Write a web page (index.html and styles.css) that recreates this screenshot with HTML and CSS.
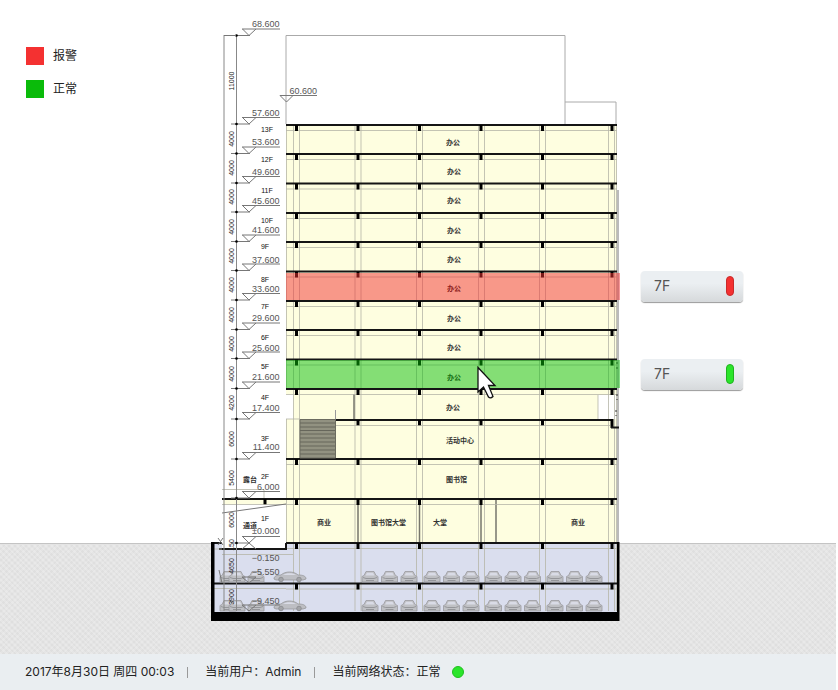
FILE: index.html
```html
<!DOCTYPE html>
<html lang="zh-CN">
<head>
<meta charset="utf-8">
<title>楼层监控</title>
<link rel="stylesheet" href="styles.css">
</head>
<body>
<main class="scene">
  <ul class="legend">
    <li class="legend-item"><span class="swatch swatch-alarm"></span>报警</li>
    <li class="legend-item"><span class="swatch swatch-normal"></span>正常</li>
  </ul>

  <svg class="section" viewBox="210 0 410 654" role="img" aria-label="楼层剖面图">
    <defs>
      <g id="beam">
        <path class="thin" d="M286 5.5H617"/>
        <path class="slab" d="M286 0H617"/>
        <path class="stub" d="M296.500 0V6M358 0V6M419.500 0V6M481 0V6M542.500 0V6M612 0V6"/>
      </g>
      <g id="level">
        <path class="mark" d="M242 -6.500H280M242.500 -6.500L249 0L256 -6.500M231 0H250"/>
        <circle cx="236.500" cy="0" r="1.300"/>
      </g>
      <g id="car">
        <path d="M0 11V5.500L2 4.500L4 0.500H12L14 4.500L16 5.500V11Z" fill="#bfc0c4" stroke="#9a9b9f" stroke-width=".8"/>
        <path d="M3.500 4.500L5 1.700H11L12.500 4.500Z" fill="#d9dbe6"/>
        <path d="M1 6.500L4 7.500H12L15 6.500M4 9.500H12" fill="none" stroke="#8a8b8f" stroke-width=".8"/>
      </g>
      <g id="bay"><use href="#car"/><use href="#car" x="19.500"/><use href="#car" x="39"/></g>
      <g id="side">
        <path d="M0 8C0 5 3 4 7 4C11 0 20 0 24 4C29 4 32 5 32 8L29 9H2Z" fill="#bdbec3" stroke="#97989c" stroke-width=".8"/>
        <path d="M9 4C12 1.500 19 1.500 22 4Z" fill="#d9dbe6"/>
        <circle cx="7" cy="8.500" r="2.300" fill="#a3a4a8" stroke="#88898d" stroke-width=".8"/>
        <circle cx="25" cy="8.500" r="2.300" fill="#a3a4a8" stroke="#88898d" stroke-width=".8"/>
      </g>
      <g id="parking">
        <use href="#car" x="220"/><use href="#car" x="229"/><use href="#car" x="248"/><use href="#side" x="274"/>
        <use href="#bay" x="362"/><use href="#bay" x="424"/><use href="#bay" x="485.500"/><use href="#bay" x="547"/>
      </g>
    </defs>

    <!-- roof outlines -->
    <path class="roof" d="M286 124V35.500H565V124M565 102H616V124"/>

    <!-- floors above ground -->
    <path fill="#fefee0" d="M286 125H617V543H286V419H293.500V394H286Z"/>
    <path fill="#fefee0" d="M223 499H286V504H223Z"/>
    <path fill="#fff" d="M222 504H286V549H222Z"/>
    <path fill="#fff" d="M598 395H617V419H598Z"/>
    <!-- basement -->
    <path fill="#dadeee" d="M213 543H286V549H618V612H213Z"/>
    <path fill="#dadeee" d="M286 543H618V550H286Z"/>
    <path fill="#fff" d="M222 541H286V549H222Z"/>

    <path class="thin" d="M286.500 125V389M286.500 419V543M293.500 125V611M299.500 125V611M355 125V611M361 125V611M416.500 125V611M422.500 125V611M478.500 125V611M484.500 125V611M539.500 125V611M545.500 125V611M608.500 125V611M614.500 125V611M616.500 125V611M598 395V419"/>
    <path class="thin wide" d="M618 190V543"/>
    <path d="M358 500V543M419.500 500V543M481 500V543M496 500V543M354 394V419" stroke="#77776c" stroke-width="1.500"/>

    <use href="#beam" y="125"/><use href="#beam" y="154"/><use href="#beam" y="183.500"/>
    <use href="#beam" y="213"/><use href="#beam" y="242"/><use href="#beam" y="271.500"/>
    <use href="#beam" y="301"/><use href="#beam" y="330"/><use href="#beam" y="359.500"/>
    <use href="#beam" y="389"/><use href="#beam" y="459"/><use href="#beam" y="499"/>
    <use href="#beam" y="543"/><use href="#beam" y="583.500"/>
    <path class="slab" d="M335 420H612M222 499H286M212 543H222M213 583.500H286M286 543V549H219"/>
    <path class="stub" d="M358 420V426M419.500 420V426M481 420V426M542.500 420V426M612 419V428M265 499V505"/>
    <path class="slab" d="M611 427.500H619"/>
    <path class="thin" d="M335 425.500H610M286 419H300M213 549H222M222 554.500H293M213 588.500H286M222 504.500H286M222 489.500H264V498"/>
    <path d="M335.500 410V420" stroke="#999" fill="none"/>

    <!-- stairs -->
    <path fill="#929281" stroke="#6c6c60" d="M300 419.500H335.500V458H300Z"/>
    <path stroke="#66665b" d="M300 423H335M300 427H335M300 430.500H335M300 434H335M300 438H335M300 442H335M300 446H335M300 450H335M300 454H335"/>

    <use href="#parking" y="571"/><use href="#parking" y="600"/>
    <path class="mark" d="M222 513L286 504"/>
    <path d="M211 542H214.500V612H617V542H619.500V621H211Z"/>
    <path class="wall" d="M617 362V369M617 394V400M616 410V416"/>

    <!-- status overlays -->
    <path class="overlay-alarm" d="M286 273H620V300H286Z"/>
    <path class="overlay-normal" d="M286 360H620V388H286Z"/>

    <!-- dimension lines and level marks -->
    <path class="dimension" d="M224 35V611M236.500 35V611"/>
    <use href="#level" y="35.500"/><use href="#level" y="124"/><use href="#level" y="153.500"/>
    <use href="#level" y="183"/><use href="#level" y="212"/><use href="#level" y="241.500"/>
    <use href="#level" y="270.500"/><use href="#level" y="300"/><use href="#level" y="329.500"/>
    <use href="#level" y="358.500"/><use href="#level" y="388.500"/><use href="#level" y="419"/>
    <use href="#level" y="459"/><use href="#level" y="498"/><use href="#level" y="543"/>
    <path class="mark" d="M224 35.500H236M280 95.500H317M280 95.500L286.500 102L293 95.500M249 543L242 549M249 543L256 549M242 577H256M242 577L249 583L256 577M242 605H280M242 605L249 611L256 605M218 538L223 545M218 545L223 538M219 570L222 583"/>

    <g class="elevation">
      <text x="279.500" y="27">68.600</text><text x="317" y="94">60.600</text>
      <text x="279.500" y="116">57.600</text><text x="279.500" y="145">53.600</text>
      <text x="279.500" y="175">49.600</text><text x="279.500" y="204">45.600</text>
      <text x="279.500" y="233">41.600</text><text x="279.500" y="263">37.600</text>
      <text x="279.500" y="292">33.600</text><text x="279.500" y="321">29.600</text>
      <text x="279.500" y="351">25.600</text><text x="279.500" y="380">21.600</text>
      <text x="279.500" y="411">17.400</text><text x="279.500" y="450">11.400</text>
      <text x="279.500" y="490">6.000</text><text x="279.500" y="534">±0.000</text>
      <text x="279.500" y="561">−0.150</text><text x="279.500" y="575">−5.550</text>
      <text x="279.500" y="604">−9.450</text>
    </g>
    <g class="floor">
      <text x="267" y="132">13F</text><text x="267" y="162">12F</text><text x="267" y="193">11F</text>
      <text x="267" y="223">10F</text><text x="265" y="249">9F</text><text x="265" y="282">8F</text>
      <text x="265" y="309">7F</text><text x="265" y="340">6F</text><text x="265" y="369">5F</text>
      <text x="265" y="400">4F</text><text x="265" y="441">3F</text><text x="265" y="479">2F</text>
      <text x="265" y="521">1F</text>
    </g>
    <g class="dim">
      <text transform="translate(234 81) rotate(-90)">11000</text>
      <text transform="translate(234 139) rotate(-90)">4000</text>
      <text transform="translate(234 168) rotate(-90)">4000</text>
      <text transform="translate(234 197) rotate(-90)">4000</text>
      <text transform="translate(234 227) rotate(-90)">4000</text>
      <text transform="translate(234 256) rotate(-90)">4000</text>
      <text transform="translate(234 285) rotate(-90)">4000</text>
      <text transform="translate(234 315) rotate(-90)">4000</text>
      <text transform="translate(234 344) rotate(-90)">4000</text>
      <text transform="translate(234 374) rotate(-90)">4000</text>
      <text transform="translate(234 403) rotate(-90)">4200</text>
      <text transform="translate(234 439) rotate(-90)">6000</text>
      <text transform="translate(234 478) rotate(-90)">5400</text>
      <text transform="translate(234 520) rotate(-90)">6000</text>
      <text transform="translate(234 545) rotate(-90)">150</text>
      <text transform="translate(234 566) rotate(-90)">4650</text>
      <text transform="translate(234 597) rotate(-90)">3900</text>
    </g>
    <g class="room">
      <text x="446" y="145">办公</text><text x="447" y="174">办公</text><text x="447" y="203">办公</text>
      <text x="447" y="233">办公</text><text x="447" y="262">办公</text><text class="on-alarm" x="447" y="291">办公</text>
      <text x="447" y="321">办公</text><text x="447" y="350">办公</text><text class="on-normal" x="447" y="380">办公</text>
      <text x="446" y="410">办公</text><text x="446" y="443">活动中心</text><text x="446" y="482">图书馆</text>
      <text x="317" y="525">商业</text><text x="371" y="525">图书馆大堂</text>
      <text x="433" y="525">大堂</text><text x="571" y="525">商业</text>
      <text x="243" y="482">露台</text><text x="243" y="528">通道</text>
    </g>

    <!-- pointer -->
    <path d="M478 367.500V392L483.500 387L488.500 397Q490.500 399 493 396.500L488.500 385.500H495Z" fill="#fff" stroke="#111" stroke-width="1.300"/>
  </svg>

  <div class="tags">
    <button class="tag" type="button">7F<span class="lamp lamp-alarm"></span></button>
    <button class="tag" type="button">7F<span class="lamp lamp-normal"></span></button>
  </div>
</main>

<footer class="status">
  <span class="status-item">2017年8月30日 周四 00:03</span>
  <span class="status-item">当前用户：Admin</span>
  <span class="status-item">当前网络状态：正常<span class="dot"></span></span>
</footer>
</body>
</html>
```
FILE: styles.css
```css
* { box-sizing: border-box; }

body {
  margin: 0;
  padding-right: 2px;
  min-height: 100vh;
  display: flex;
  flex-direction: column;
  background: #fff;
  color: #222;
  font: 12px/18px Inter, "Noto Sans CJK SC", sans-serif;
}

.scene {
  flex: 1;
  display: flex;
  align-items: flex-start;
  background:
    linear-gradient(#c4c4c4, #c4c4c4) 0 calc(100% - 110px) / 100% 1px no-repeat,
    linear-gradient(#fff, #fff) top / 100% calc(100% - 111px) no-repeat,
    repeating-linear-gradient(45deg, rgba(255, 255, 255, .2) 0 2px, transparent 2px 4px),
    repeating-linear-gradient(-45deg, #dfdfdf 0 2px, #e4e4e4 2px 4px);
}

.legend {
  flex: 0 0 210px;
  margin: 0;
  padding: 47px 0 0 26px;
  list-style: none;
  display: flex;
  flex-direction: column;
  gap: 15px;
}

.legend-item {
  display: flex;
  align-items: center;
  gap: 9px;
  line-height: 20px;
  height: 18px;
}

.swatch { width: 18px; height: 18px; }
.swatch-alarm { background: #f43131; }
.swatch-normal { background: #0abb0a; }

.section {
  flex: 0 1 410px;
  min-width: 0;
  display: block;
}

.roof { fill: none; stroke: #aaa; }
.thin { fill: none; stroke: #b5b5a8; stroke-opacity: .8; }
.wide { stroke: #aaa; stroke-width: 2; }
.slab { fill: none; stroke: #151515; stroke-width: 2; }
.stub { fill: none; stroke: #000; stroke-width: 3; }
.wall { fill: none; stroke: #333; stroke-width: 1; stroke-dasharray: 2 3; }
.mark { fill: none; stroke: #777; stroke-width: 1; }
.dimension { fill: none; stroke: #888; }
.overlay-alarm { fill: #f23232; fill-opacity: .5; }
.overlay-normal { fill: #0abe0a; fill-opacity: .5; }

.elevation, .floor, .dim {
  font-family: "Liberation Sans Narrow", "Liberation Sans", sans-serif;
  fill: #555;
}
.elevation { font-size: 9px; text-anchor: end; }
.floor { font-size: 7px; text-anchor: middle; fill: #111; }
.dim { font-size: 7px; text-anchor: middle; fill: #222; }
.room { font: 700 7px "Noto Sans CJK SC", sans-serif; fill: #333; }
.on-alarm { fill: #8d1d1d; }
.on-normal { fill: #167016; }

.tags {
  padding: 271px 0 0 21px;
  display: flex;
  flex-direction: column;
  gap: 57px;
}

.tag {
  width: 102px;
  height: 31px;
  padding: 0 9px 2px 13px;
  display: flex;
  align-items: center;
  justify-content: space-between;
  border: 0;
  border-radius: 4px;
  background: linear-gradient(#ebeff2 40%, #d6d9db);
  box-shadow: 0 1px 1px #999;
  color: #555;
  font: 14px/20px Inter, "Noto Sans CJK SC", sans-serif;
}

.lamp {
  width: 8px;
  height: 20px;
  border: 1px solid;
  border-radius: 4px;
}
.lamp-alarm { background: #f43131; border-color: #c92a2a; }
.lamp-normal { background: #2be52b; border-color: #20b320; }

.status {
  height: 36px;
  padding: 0 25px;
  display: flex;
  align-items: center;
  background: #eaeef1;
}

.status-item { display: flex; align-items: center; }
.status-item + .status-item::before {
  content: "";
  width: 1px;
  height: 11px;
  margin: 0 17px 0 13px;
  background: #999;
}

.dot {
  width: 12px;
  height: 12px;
  margin-left: 12px;
  border: 1px solid #20c020;
  border-radius: 50%;
  background: #2be52b;
}
```
